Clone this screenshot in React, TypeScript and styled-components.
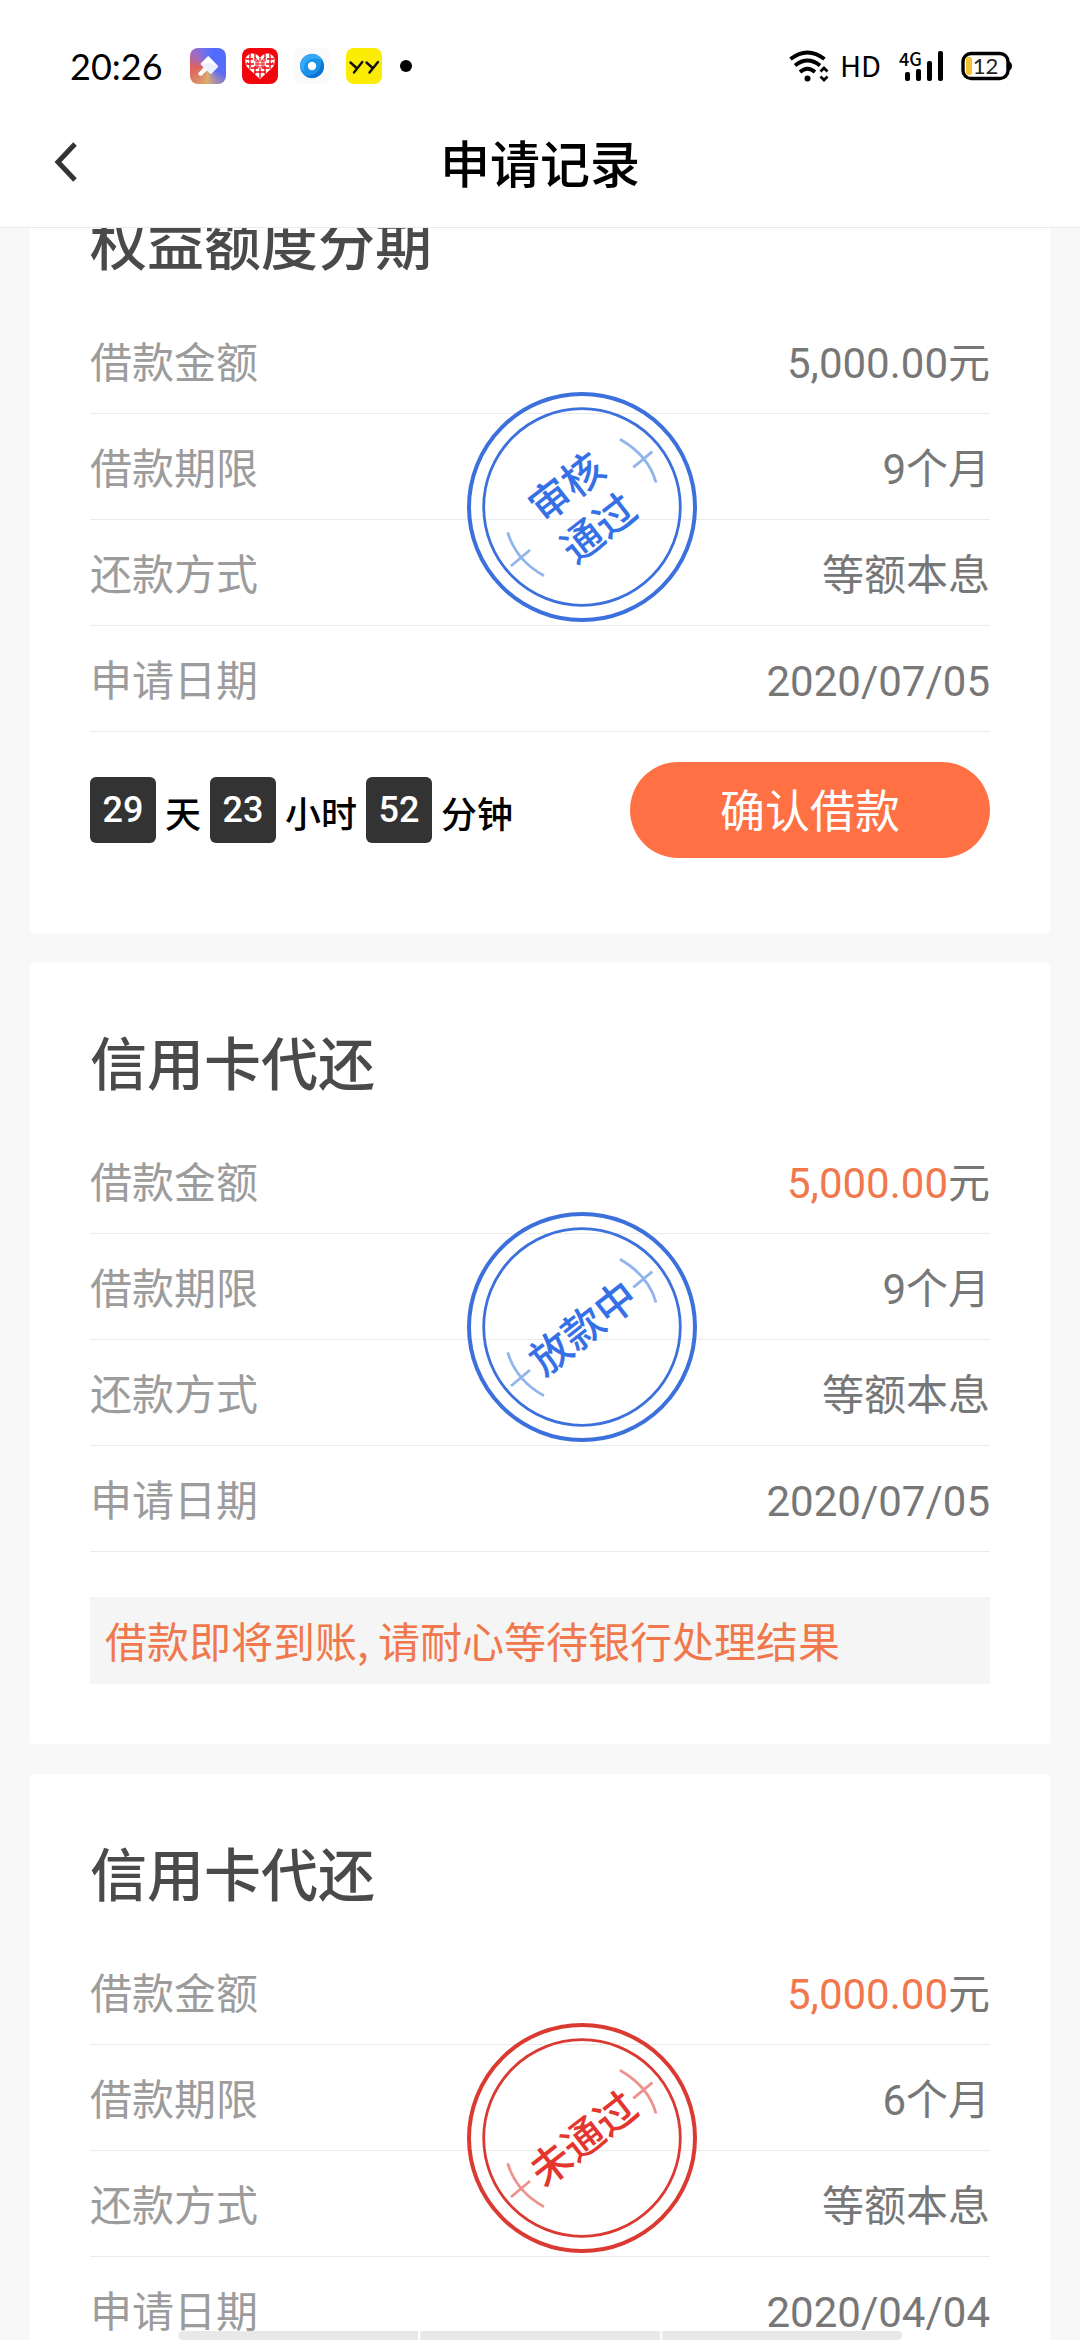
import React, { useLayoutEffect, useRef } from 'react';
import styled, { createGlobalStyle } from 'styled-components';

const GlobalStyle = createGlobalStyle`
  *, *::before, *::after { box-sizing: border-box; }
  html, body { margin: 0; background: #f8f8f8; }
  body { font-family: Roboto, "Noto Sans CJK SC", sans-serif; }
  h1, h2, dl, dd, p { margin: 0; }
`;

const Screen = styled.div`
  position: relative;
  display: flex;
  flex-direction: column;
  height: 100vh;
  overflow: hidden;
  background: #f8f8f8;
`;

const TopBar = styled.header`
  flex: none;
  background: #fff;
  border-bottom: 1px solid #e9e9e9;
`;

const StatusBar = styled.div`
  display: flex;
  align-items: center;
  justify-content: space-between;
  height: 132px;
  padding: 0 68px 0 70px;
`;

const StatusGroup = styled.div<{ $gap: number }>`
  display: flex;
  align-items: center;
  gap: ${(p) => p.$gap}px;
`;

const Clock = styled.time`
  margin-right: 11px;
  font: 400 36px/48px Lato, sans-serif;
  color: #000;
`;

const AppIcon = styled.span<{ $fill: string }>`
  display: block;
  width: 36px;
  height: 36px;
  border-radius: 8px;
  background: ${(p) => p.$fill};
  svg { display: block; }
`;

const MoreDot = styled.span`
  width: 12px;
  height: 12px;
  margin-left: 2px;
  border-radius: 50%;
  background: #000;
`;

const HdLabel = styled.span`
  padding-bottom: 4px;
  font: 400 29px/36px "Noto Sans CJK SC", sans-serif;
  color: #000;
`;

const Signal = styled.span`
  position: relative;
  display: block;
  width: 44px;
  height: 32px;
  svg { display: block; }
`;

const NetworkLabel = styled.span`
  position: absolute;
  left: 0;
  top: -2px;
  font: 500 18px/20px "Noto Sans CJK SC", sans-serif;
  color: #000;
`;

const Battery = styled.span`
  position: relative;
  display: block;
  width: 51px;
  height: 30px;
  svg { display: block; }
`;

const BatteryLevel = styled.span`
  position: absolute;
  inset: 0 10px 0 8px;
  font: 400 22px/30px Lato, sans-serif;
  text-align: center;
  color: #222;
`;

const NavBar = styled.div`
  display: grid;
  grid-template-columns: 96px 1fr 96px;
  align-items: start;
  padding-bottom: 27px;
`;

const BackButton = styled.button`
  display: flex;
  align-items: center;
  height: 60px;
  padding: 0 0 0 54px;
  border: 0;
  background: none;
`;

const PageTitle = styled.h1`
  font-size: 50px;
  line-height: 68px;
  font-weight: 500;
  text-align: center;
  color: #000;
`;

const Scroller = styled.main`
  flex: 1;
  min-height: 0;
  overflow-y: auto;
  scrollbar-width: none;
  &::-webkit-scrollbar { display: none; }
`;

const CardList = styled.div`
  display: flex;
  flex-direction: column;
  gap: 30px;
  padding: 30px;
`;

const Card = styled.article<{ $bottom: number }>`
  position: relative;
  padding: 60px 60px ${(p) => p.$bottom}px;
  border-radius: 4px;
  background: #fff;
`;

const CardTitle = styled.h2`
  margin-bottom: 20px;
  font-size: 57px;
  line-height: 85px;
  font-weight: 500;
  color: #4a4a4a;
`;

const Row = styled.div`
  display: flex;
  align-items: center;
  justify-content: space-between;
  height: 106px;
  padding-top: 6px;
  border-bottom: 1px solid #ebebeb;
  font-size: 42px;
  line-height: 60px;
`;

const Label = styled.dt`
  color: #9c9c9c;
`;

const Value = styled.dd`
  color: #777;
`;

const Amount = styled.span<{ $highlight?: boolean }>`
  color: ${(p) => (p.$highlight ? '#f0784c' : 'inherit')};
`;

const Actions = styled.div`
  display: flex;
  align-items: center;
  justify-content: space-between;
  padding-top: 30px;
`;

const Countdown = styled.div`
  display: flex;
  align-items: center;
  gap: 9px;
  font-size: 36px;
  font-weight: 500;
  color: #000;
`;

const TimeBox = styled.span`
  width: 66px;
  height: 66px;
  border-radius: 6px;
  background: #333;
  color: #fff;
  line-height: 66px;
  text-align: center;
`;

const TimeUnit = styled.span`
  padding-top: 12px;
  line-height: 48px;
`;

const ConfirmButton = styled.button`
  width: 360px;
  height: 96px;
  padding: 6px 0 0;
  border: 0;
  border-radius: 48px;
  background: #ff7144;
  color: #fff;
  font: 400 45px/90px Roboto, "Noto Sans CJK SC", sans-serif;
`;

const Notice = styled.p`
  margin-top: 45px;
  padding: 13px 15px 14px;
  background: #f5f5f5;
  font: 400 42px/60px "Noto Sans CJK SC", sans-serif;
  color: #f0784c;
`;

const StampBox = styled.div`
  position: absolute;
  top: 249px;
  left: calc(50% - 73px);
  display: grid;
  place-items: center;
  width: 230px;
  height: 230px;
  pointer-events: none;
  > * { grid-area: 1 / 1; }
`;

const StampText = styled.span<{ $color: string }>`
  padding-top: 4px;
  transform: rotate(-38deg);
  font-size: 41px;
  line-height: 52px;
  font-weight: 500;
  text-align: center;
  white-space: pre;
  color: ${(p) => p.$color};
`;

const HomeHint = styled.div`
  position: absolute;
  bottom: 0;
  left: 50%;
  display: flex;
  gap: 2px;
  width: 67%;
  height: 9px;
  overflow: hidden;
  border-radius: 6px;
  background: #fff;
  transform: translateX(-50%);
`;

const HintSegment = styled.span`
  flex: 1;
  background: #e8e8e8;
`;

type Tone = 'blue' | 'red';

const tones: Record<Tone, { ring: string; text: string; mark: string }> = {
  blue: { ring: '#3c70dc', text: '#3570e6', mark: '#92b4ec' },
  red: { ring: '#db3a32', text: '#e3362e', mark: '#ec938e' },
};

function Stamp({ tone, text }: { tone: Tone; text: string }) {
  const c = tones[tone];
  return (
    <StampBox>
      <svg width="230" height="230" viewBox="0 0 230 230" fill="none" aria-hidden="true">
        <circle cx="115" cy="115" r="113" stroke={c.ring} strokeWidth="4" />
        <circle cx="115" cy="115" r="98.3" stroke={c.ring} strokeWidth="2.8" />
        <g stroke={c.mark} strokeWidth="2.8">
          <path d="M153 47.3Q181.6 63.6 189 90.5M166.3 75.3L185.3 59.7" />
          <path d="M40.7 140.3Q49.2 168.6 77 183.7M44 174L63 158" />
        </g>
      </svg>
      <StampText $color={c.text}>{text}</StampText>
    </StampBox>
  );
}

interface LoanRecord {
  title: string;
  amount: string;
  highlight?: boolean;
  term: string;
  date: string;
  tone: Tone;
  stamp: string;
  countdown?: [string, string][];
  notice?: string;
}

const records: LoanRecord[] = [
  {
    title: '权益额度分期',
    amount: '5,000.00',
    term: '9个月',
    date: '2020/07/05',
    tone: 'blue',
    stamp: '审核\n通过',
    countdown: [['29', '天'], ['23', '小时'], ['52', '分钟']],
  },
  {
    title: '信用卡代还',
    amount: '5,000.00',
    highlight: true,
    term: '9个月',
    date: '2020/07/05',
    tone: 'blue',
    stamp: '放款中',
    notice: '借款即将到账, 请耐心等待银行处理结果',
  },
  {
    title: '信用卡代还',
    amount: '5,000.00',
    highlight: true,
    term: '6个月',
    date: '2020/04/04',
    tone: 'red',
    stamp: '未通过',
  },
];

function RecordCard({ record }: { record: LoanRecord }) {
  return (
    <Card $bottom={record.countdown ? 75 : 60}>
      <CardTitle>{record.title}</CardTitle>
      <dl>
        <Row>
          <Label>借款金额</Label>
          <Value><Amount $highlight={record.highlight}>{record.amount}</Amount>元</Value>
        </Row>
        <Row><Label>借款期限</Label><Value>{record.term}</Value></Row>
        <Row><Label>还款方式</Label><Value>等额本息</Value></Row>
        <Row><Label>申请日期</Label><Value>{record.date}</Value></Row>
      </dl>
      {record.countdown && (
        <Actions>
          <Countdown>
            {record.countdown.map(([n, unit]) => (
              <React.Fragment key={unit}>
                <TimeBox>{n}</TimeBox>
                <TimeUnit>{unit}</TimeUnit>
              </React.Fragment>
            ))}
          </Countdown>
          <ConfirmButton type="button">确认借款</ConfirmButton>
        </Actions>
      )}
      {record.notice && <Notice>{record.notice}</Notice>}
      <Stamp tone={record.tone} text={record.stamp} />
    </Card>
  );
}

function BrushIcon() {
  return (
    <svg width="36" height="36" viewBox="0 0 36 36" aria-hidden="true">
      <path d="M19 8.500L27.800 17.800Q28.500 18.500 27.800 19.300L21.500 25.500Q20.700 26.300 20 25.500L17 22.500L11.500 27.800Q8.500 28.300 8.200 25.300L13.600 19.400L11 16.700Q10.300 16 11 15.200L17.600 8.500Q18.300 7.800 19 8.500Z" fill="#fff" />
      <path d="M11 16.500L20.200 25.600L27.800 18.500L18.500 14.500Z" fill="#e4e6fb" opacity=".6" />
    </svg>
  );
}

function HeartIcon() {
  return (
    <svg width="36" height="36" viewBox="0 0 36 36" aria-hidden="true">
      <path d="M18 31L5.500 19.500Q3 16.500 3.300 12Q4 6.500 9.500 5.500Q15 5 18 10Q21 5 26.500 5.500Q32 6.500 32.700 12Q33 16.500 30.500 19.500Z" fill="#fff" />
      <g stroke="#f0060c" strokeWidth="1.300" fill="none">
        <path d="M8 6V21M13 6V13M13 18V26M23 6V13M23 18V26M28 6V21M18 10V12M18 20V30" />
        <path d="M4 11H11M25 11H32M4 16H12M24 16H32M9 20H16M20 20H27M12 24H24" />
        <path d="M14 13H22V19H14ZM16 13V19M20 13V19M14 16H22" strokeWidth=".9" />
        <path d="M5 14L8 18M31 14L28 18M13 9L16 13M23 9L20 13" strokeWidth=".9" />
      </g>
    </svg>
  );
}

function RingIcon() {
  return (
    <svg width="36" height="36" viewBox="0 0 36 36" aria-hidden="true">
      <circle cx="18" cy="18" r="12" fill="#1b93ea" />
      <path d="M6 18A12 12 0 0 1 29 13Q24 9 17 11Q9 14 10 23Q6.500 22 6 18Z" fill="#35a9f5" />
      <path d="M30 18A12 12 0 0 1 10 27Q18 29 23 24Q28 20 27 11Q30 14 30 18Z" fill="#0d74cf" />
      <circle cx="18" cy="18" r="4.200" fill="#fff" />
    </svg>
  );
}

function YyIcon() {
  return (
    <svg width="36" height="36" viewBox="0 0 36 36" fill="none" stroke="#111" strokeWidth="2.400" strokeLinecap="round" aria-hidden="true">
      <path d="M4.500 14.500L10.500 20M16.300 14L8 24.500M20.500 14.500L26.500 20M32 14L23.500 24.500" />
    </svg>
  );
}

function WifiIcon() {
  return (
    <svg width="40" height="32" viewBox="0 0 40 32" fill="none" stroke="#000" aria-hidden="true">
      <path d="M1.500 9Q18.500 -4 35.500 9" strokeWidth="4" />
      <path d="M6 15.500Q18.500 5.500 31 15.500" strokeWidth="3.800" />
      <path d="M11 22Q18.500 15.500 26 22" strokeWidth="3.800" />
      <circle cx="18.500" cy="28.500" r="3" fill="#000" stroke="none" />
      <path d="M31.500 21.500L35 18L38.500 21.500M31.500 26.500L35 30L38.500 26.500" strokeWidth="2.700" />
    </svg>
  );
}

export default function App() {
  const scroller = useRef<HTMLElement>(null);

  // Open the list scrolled part of the way into the first record.
  useLayoutEffect(() => {
    if (scroller.current) scroller.current.scrollTop = 115;
  }, []);

  return (
    <Screen>
      <GlobalStyle />
      <TopBar>
        <StatusBar>
          <StatusGroup $gap={16}>
            <Clock>20:26</Clock>
            <AppIcon $fill="conic-gradient(from 20deg at 50% 55%, #4f6bff, #5a6cf5 25%, #a58cb0 36%, #dcae6c 45%, #d98a68 55%, #e0605c 70%, #a06cc0 82%, #6a70f0 92%, #4f6bff)">
              <BrushIcon />
            </AppIcon>
            <AppIcon $fill="#f0060c"><HeartIcon /></AppIcon>
            <AppIcon $fill="#fafafa"><RingIcon /></AppIcon>
            <AppIcon $fill="#fcec04"><YyIcon /></AppIcon>
            <MoreDot />
          </StatusGroup>
          <StatusGroup $gap={18}>
            <StatusGroup $gap={11}>
              <WifiIcon />
              <HdLabel>HD</HdLabel>
            </StatusGroup>
            <Signal>
              <svg width="44" height="32" viewBox="0 0 44 32" aria-hidden="true">
                <rect x="6" y="22" width="5" height="9" rx="2" />
                <rect x="17" y="19" width="5" height="12" rx="2" />
                <rect x="28" y="11" width="5" height="20" rx="2" />
                <rect x="39" y="1" width="5" height="30" rx="2" />
              </svg>
              <NetworkLabel>4G</NetworkLabel>
            </Signal>
            <Battery>
              <svg width="51" height="30" viewBox="0 0 51 30" aria-hidden="true">
                <rect x="2" y="2.500" width="45" height="25" rx="8" fill="none" stroke="#000" strokeWidth="3.400" />
                <path d="M47 10Q51 11 51 15T47 20Z" />
                <rect x="5" y="6" width="6" height="18" rx="2.500" fill="#f2c230" />
              </svg>
              <BatteryLevel>12</BatteryLevel>
            </Battery>
          </StatusGroup>
        </StatusBar>
        <NavBar>
          <BackButton type="button" aria-label="返回">
            <svg width="24" height="40" viewBox="0 0 24 40" fill="none" stroke="#333" strokeWidth="5" aria-hidden="true">
              <path d="M21 2L4 20L21 38" />
            </svg>
          </BackButton>
          <PageTitle>申请记录</PageTitle>
        </NavBar>
      </TopBar>
      <Scroller ref={scroller}>
        <CardList>
          {records.map((record, i) => (
            <RecordCard key={i} record={record} />
          ))}
        </CardList>
      </Scroller>
      <HomeHint>
        <HintSegment />
        <HintSegment />
        <HintSegment />
      </HomeHint>
    </Screen>
  );
}
